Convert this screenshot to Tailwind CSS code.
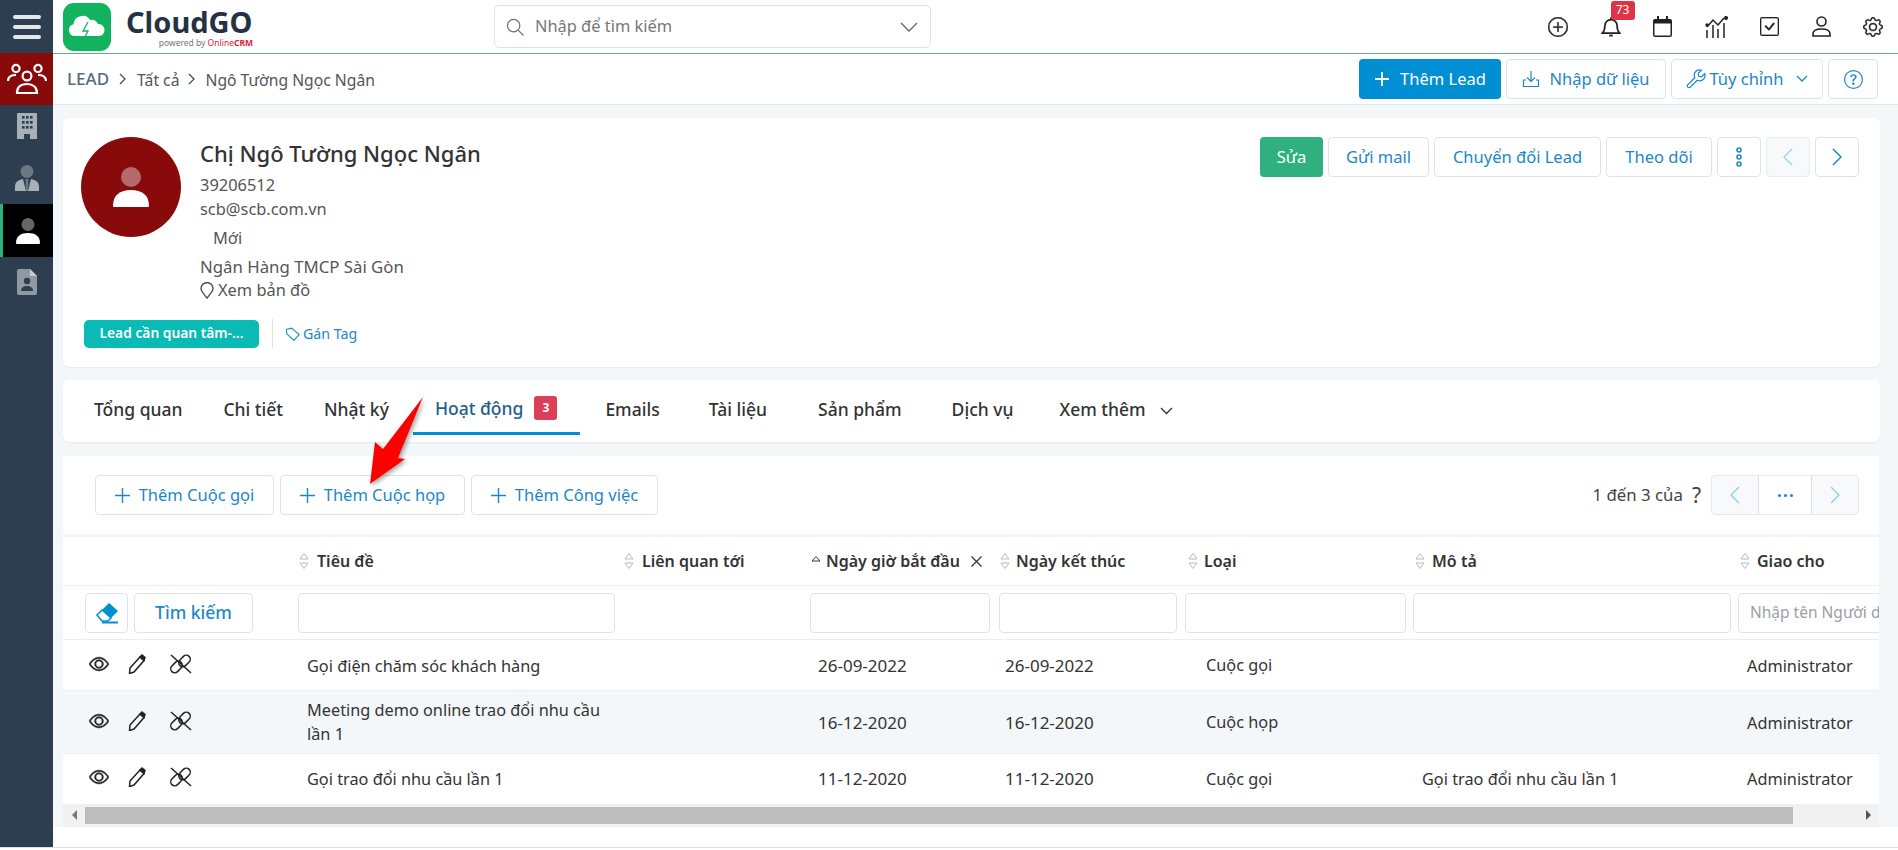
<!DOCTYPE html>
<html lang="vi">
<head>
<meta charset="UTF-8">
<title>CloudGO - Lead</title>
<script src="https://cdn.jsdelivr.net/npm/@tailwindcss/browser@4"></script>
</head>
<body class="bg-white font-['Noto_Sans',sans-serif] text-[14px] text-[#333]">
<div class="relative h-[850px] w-[1898px] overflow-hidden">
  <div class="flex h-[848px] w-full border-b border-[#dfe1e3]">
    <!-- Sidebar -->
    <aside class="flex w-[53px] shrink-0 flex-col bg-[#2c3e50]">
      <div class="flex h-[53px] items-center justify-center">
        <div class="flex w-[28px] flex-col gap-[6px]">
          <span class="h-[4px] rounded bg-[#e5e7eb]"></span><span class="h-[4px] rounded bg-[#e5e7eb]"></span><span class="h-[4px] rounded bg-[#e5e7eb]"></span>
        </div>
      </div>
      <div class="flex h-[52px] items-center justify-center bg-[#880a0a]">
        <svg width="40" height="32" viewBox="0 0 40 32" fill="none" stroke="white" stroke-width="2.2"><circle cx="9" cy="5.5" r="3.6"/><circle cx="31" cy="5.5" r="3.6"/><circle cx="20" cy="13" r="4.4"/><path d="M1 18c0-4 3-6 8-6"/><path d="M39 18c0-4-3-6-8-6"/><path d="M10 30c0-6 4-9 10-9s10 3 10 9z"/></svg>
      </div>
      <div class="flex h-[42px] items-center justify-center">
        <svg width="20" height="26" viewBox="0 0 20 26"><path fill="#a7b0b8" d="M1 0h18a1 1 0 0 1 1 1v25h-7v-5H7v5H0V1a1 1 0 0 1 1-1z"/><g fill="#2c3e50"><rect x="5" y="3" width="2.6" height="2.6"/><rect x="9" y="3" width="2.6" height="2.6"/><rect x="13" y="3" width="2.6" height="2.6"/><rect x="5" y="8" width="2.6" height="2.6"/><rect x="9" y="8" width="2.6" height="2.6"/><rect x="13" y="8" width="2.6" height="2.6"/><rect x="5" y="13" width="2.6" height="2.6"/><rect x="9" y="13" width="2.6" height="2.6"/><rect x="13" y="13" width="2.6" height="2.6"/></g></svg>
      </div>
      <div class="flex h-[57px] items-center justify-center pt-[5px]">
        <svg width="24" height="26" viewBox="0 0 24 26"><circle cx="12" cy="6.5" r="6.5" fill="#6b7884"/><path fill="#a7b0b8" d="M0 26v-4c0-5 3-7 8-8l3 12zM24 26v-4c0-5-3-7-8-8l-3 12z"/><path fill="#6b7884" d="M10.500 14h3L13 26h-2z"/></svg>
      </div>
      <div class="flex h-[53px] items-center justify-center border-l-[3px] border-[#2db27d] bg-black">
        <svg width="24" height="26" viewBox="0 0 24 26"><circle cx="12" cy="6.500" r="6.500" fill="#666"/><path fill="#fff" d="M1 26c-1 0-1-1-1-1 0-7 5-10 12-10s12 3 12 10c0 0 0 1-1 1z"/></svg>
      </div>
      <div class="flex h-[50px] items-center justify-center">
        <svg width="20" height="26" viewBox="0 0 20 26"><path fill="#8e99a3" d="M2 0h11l7 7v17a2 2 0 0 1-2 2H2a2 2 0 0 1-2-2V2a2 2 0 0 1 2-2z"/><path fill="#c5cbd0" d="M13 0l7 7h-7z"/><circle cx="10" cy="12" r="3.200" fill="#2c3e50"/><path fill="#2c3e50" d="M4 22c0-3.500 2.500-5 6-5s6 1.500 6 5z"/></svg>
      </div>
    </aside>

    <div class="flex min-w-0 flex-1 flex-col bg-[#f4f7fa]">
      <!-- Top header -->
      <header class="flex h-[54px] shrink-0 items-center border-b border-[#5fb38b] bg-white pl-[10px]">
        <div class="flex h-[48px] w-[48px] items-center justify-center rounded-[11px] bg-[#12b35f]">
          <svg width="38" height="26" viewBox="0 0 38 26"><path fill="#fff" d="M7 22a6 6 0 0 1-1.500-11.800A9 9 0 0 1 22 6a6.500 6.500 0 0 1 8 4 6 6 0 0 1 1 12z"/><path fill="none" stroke="#12b35f" stroke-width="1.300" d="M20 8l-5 9h5l-4 8"/></svg>
        </div>
        <div class="ml-[15px] flex w-[127px] flex-col items-end">
          <span class="h-[33px] w-full text-[29px] leading-[33px] font-bold text-[#253243]">CloudGO</span>
          <span class="text-[8.500px] leading-[10px] text-[#777]">powered by <span class="text-[#d9263a]">Online<b class="font-bold">CRM</b></span></span>
        </div>
        <div class="ml-[241px] flex h-[43px] w-[437px] items-center rounded-[5px] border border-[#dfe3e7] pr-[12px] pl-[11px]">
          <svg width="18" height="18" viewBox="0 0 16 16" fill="none" stroke="#6b7280" stroke-width="1.100"><circle cx="6.800" cy="6.800" r="5.500"/><path d="M11 11l4.500 4.500"/></svg>
          <span class="ml-[11px] flex-1 text-[16.400px] text-[#777]">Nhập để tìm kiếm</span>
          <svg width="18" height="10" viewBox="0 0 18 10" fill="none" stroke="#666" stroke-width="1.300"><path d="M1 1l8 8 8-8"/></svg>
        </div>
        <!-- Top icons -->
        <div class="ml-[617px] flex items-center gap-[32.500px] text-[#222]">
          <svg width="20" height="20" viewBox="0 0 16 16" fill="currentColor" stroke="currentColor" stroke-width=".3"><path d="M8 15A7 7 0 1 1 8 1a7 7 0 0 1 0 14zm0 1A8 8 0 1 0 8 0a8 8 0 0 0 0 16z"/><path d="M8 4a.500.500 0 0 1 .500.500v3h3a.500.500 0 0 1 0 1h-3v3a.500.500 0 0 1-1 0v-3h-3a.500.500 0 0 1 0-1h3v-3A.500.500 0 0 1 8 4z"/></svg>
          <div class="relative h-[22px] w-[20px]">
            <svg width="20" height="22" viewBox="0 0 16 18" fill="none" stroke="currentColor" stroke-width="1.400"><path d="M1 14h14c-1.500-1.500-2-3-2-6a5 5 0 0 0-10 0c0 3-.500 4.500-2 6z"/><path d="M8 3V1"/><path d="M6.500 16h3" stroke-width="1.500"/></svg>
            <span class="absolute top-[-15px] left-[10px] flex h-[19px] w-[24px] items-center justify-center rounded-[3px] bg-[#dc3545] text-[12px] leading-none text-white">73</span>
          </div>
          <svg width="19" height="21" viewBox="0 0 19 21"><path fill="#222" d="M2 3h2V0h2v3h7V0h2v3h2a2 2 0 0 1 2 2v14a2 2 0 0 1-2 2H2a2 2 0 0 1-2-2V5a2 2 0 0 1 2-2z"/><rect x="1.500" y="7.500" width="16" height="12" fill="#fff"/></svg>
          <svg width="23" height="22" viewBox="0 0 23 22" fill="none" stroke="#222" stroke-width="1.500"><path d="M2 11l6-7 5 5 6-7"/><path d="M2 14v8M8 9v13M13 13v9M19 7v15"/><circle cx="2" cy="9" r="1" fill="#222"/><circle cx="21" cy="2" r="1.300" fill="#222"/></svg>
          <svg width="19" height="19" viewBox="0 0 16 16" fill="currentColor" stroke="currentColor" stroke-width=".2"><path d="M14 1a1 1 0 0 1 1 1v12a1 1 0 0 1-1 1H2a1 1 0 0 1-1-1V2a1 1 0 0 1 1-1h12zM2 0a2 2 0 0 0-2 2v12a2 2 0 0 0 2 2h12a2 2 0 0 0 2-2V2a2 2 0 0 0-2-2H2z"/><path d="M10.970 4.970a.75.75 0 0 1 1.070 1.050l-3.990 4.990a.75.75 0 0 1-1.080.020L4.320 8.384a.75.75 0 1 1 1.060-1.060l2.094 2.093 3.473-4.425z"/></svg>
          <svg width="19" height="21" viewBox="0 0 19 21" fill="none" stroke="#222" stroke-width="1.600"><circle cx="9.500" cy="5.500" r="4.500"/><path d="M1 20v-2c0-3 3-5 8.500-5s8.500 2 8.500 5v2z"/></svg>
          <svg width="20" height="20" viewBox="0 0 16 16" fill="currentColor" stroke="currentColor" stroke-width=".25"><path d="M8 4.754a3.246 3.246 0 1 0 0 6.492 3.246 3.246 0 0 0 0-6.492zM5.754 8a2.246 2.246 0 1 1 4.492 0 2.246 2.246 0 0 1-4.492 0z"/><path d="M9.796 1.343c-.527-1.790-3.065-1.790-3.592 0l-.094.319a.873.873 0 0 1-1.255.520l-.292-.160c-1.640-.892-3.433.902-2.540 2.541l.159.292a.873.873 0 0 1-.520 1.255l-.319.094c-1.790.527-1.790 3.065 0 3.592l.319.094a.873.873 0 0 1 .520 1.255l-.160.292c-.892 1.640.901 3.434 2.541 2.540l.292-.159a.873.873 0 0 1 1.255.520l.094.319c.527 1.790 3.065 1.790 3.592 0l.094-.319a.873.873 0 0 1 1.255-.520l.292.160c1.640.893 3.434-.902 2.540-2.541l-.159-.292a.873.873 0 0 1 .520-1.255l.319-.094c1.790-.527 1.790-3.065 0-3.592l-.319-.094a.873.873 0 0 1-.520-1.255l.160-.292c.893-1.640-.902-3.433-2.541-2.540l-.292.159a.873.873 0 0 1-1.255-.520l-.094-.319zm-2.633.283c.246-.835 1.428-.835 1.674 0l.094.319a1.873 1.873 0 0 0 2.693 1.115l.291-.160c.764-.415 1.600.420 1.184 1.185l-.159.292a1.873 1.873 0 0 0 1.116 2.692l.318.094c.835.246.835 1.428 0 1.674l-.319.094a1.873 1.873 0 0 0-1.115 2.693l.160.291c.415.764-.420 1.600-1.185 1.184l-.291-.159a1.873 1.873 0 0 0-2.693 1.116l-.094.318c-.246.835-1.428.835-1.674 0l-.094-.319a1.873 1.873 0 0 0-2.692-1.115l-.292.160c-.764.415-1.600-.420-1.184-1.185l.159-.291A1.873 1.873 0 0 0 1.945 8.930l-.319-.094c-.835-.246-.835-1.428 0-1.674l.319-.094A1.873 1.873 0 0 0 3.060 4.377l-.160-.292c-.415-.764.420-1.600 1.185-1.184l.292.159a1.873 1.873 0 0 0 2.692-1.115l.094-.319z"/></svg>
        </div>
      </header>

      <!-- Breadcrumb bar -->
      <div class="flex h-[51px] shrink-0 items-center border-b border-[#e2e5e8] bg-white pr-[20px] pl-[14px]">
        <span class="text-[17px] font-medium text-[#5a6a7e]">LEAD</span>
        <svg class="mx-[10px]" width="8" height="12" viewBox="0 0 8 12" fill="none" stroke="#444" stroke-width="1.200"><path d="M1 1l5 5-5 5"/></svg>
        <span class="pt-[3px] text-[15.700px] text-[#555]">Tất cả</span>
        <svg class="mx-[9px]" width="8" height="12" viewBox="0 0 8 12" fill="none" stroke="#444" stroke-width="1.200"><path d="M1 1l5 5-5 5"/></svg>
        <span class="pt-[3px] text-[15.700px] text-[#555]">Ngô Tường Ngọc Ngân</span>
        <div class="ml-auto flex gap-[5px] text-[16.500px] text-[#1b87c9]">
          <button class="flex h-[40px] w-[142px] items-center justify-center gap-[10px] rounded-[4px] bg-[#008fd3] text-white">
            <svg width="16" height="16" viewBox="0 0 16 16" stroke="white" stroke-width="1.800"><path d="M8 1v14M1 8h14"/></svg>Thêm Lead
          </button>
          <button class="flex h-[40px] w-[160px] items-center justify-center gap-[9px] rounded-[4px] border border-[#dfe3e7] bg-white">
            <svg width="18" height="18" viewBox="0 0 18 18" fill="none" stroke="#1b87c9" stroke-width="1.200"><path d="M9 1v10M5 7.500l4 4 4-4"/><path d="M4 10H1.500v6.500h15V10H14"/></svg>Nhập dữ liệu
          </button>
          <button class="flex h-[40px] w-[152px] items-center justify-center gap-[3px] rounded-[4px] border border-[#dfe3e7] bg-white">
            <svg width="20" height="20" viewBox="0 0 16 16" fill="none" stroke="#1b87c9" stroke-width="1"><path d="M1.500 14.500a1.400 1.400 0 0 0 2 0L9 9c2 .8 4 .3 5.200-1 1-1.200 1.300-2.800.8-4.300L12.500 6.200 10.200 5.800 9.800 3.500 12.300 1c-1.500-.500-3.100-.200-4.300.800-1.300 1.200-1.800 3.200-1 5.200L1.500 12.500a1.400 1.400 0 0 0 0 2z"/></svg>Tùy chỉnh
            <svg class="ml-[9px]" width="12" height="8" viewBox="0 0 12 8" fill="none" stroke="#1b87c9" stroke-width="1.300"><path d="M1 1l5 5 5-5"/></svg>
          </button>
          <button class="flex h-[40px] w-[50px] items-center justify-center rounded-[4px] border border-[#dfe3e7] bg-white">
            <svg width="19" height="19" viewBox="0 0 16 16" fill="#1b87c9"><path d="M8 15A7 7 0 1 1 8 1a7 7 0 0 1 0 14zm0 1A8 8 0 1 0 8 0a8 8 0 0 0 0 16z"/><path d="M5.255 5.786a.237.237 0 0 0 .241.247h.825c.138 0 .248-.113.266-.250.090-.656.540-1.134 1.342-1.134.686 0 1.314.343 1.314 1.168 0 .635-.374.927-.965 1.371-.673.489-1.206 1.060-1.168 1.987l.003.217a.250.250 0 0 0 .250.246h.811a.250.250 0 0 0 .250-.250v-.105c0-.718.273-.927 1.010-1.486.609-.463 1.244-.977 1.244-2.056 0-1.511-1.276-2.241-2.673-2.241-1.267 0-2.655.590-2.750 2.286zm1.557 5.763c0 .533.425.927 1.010.927.609 0 1.028-.394 1.028-.927 0-.552-.420-.940-1.029-.940-.584 0-1.009.388-1.009.940z"/></svg>
          </button>
        </div>
      </div>

      <!-- Content -->
      <main class="flex flex-1 flex-col pt-[13px] pr-[18px] pl-[10px]">
        <!-- Profile card -->
        <section class="h-[249px] shrink-0 rounded-[6px] bg-white pt-[19px] pl-[18px] shadow-[0_1px_2px_rgba(0,0,0,0.06)]">
          <div class="flex">
            <div class="flex h-[100px] w-[100px] shrink-0 items-center justify-center rounded-full bg-[#880a0a]">
              <svg width="36" height="40" viewBox="0 0 36 40"><circle cx="18" cy="10" r="10" fill="#b46a6a"/><path fill="#fff" d="M1 40c-1 0-1-1-1-1 0-11 7-16 18-16s18 5 18 16c0 0 0 1-1 1z"/></svg>
            </div>
            <div class="ml-[19px] w-[400px] text-[16.400px] text-[#555]">
              <div class="h-[36px] text-[22px] leading-[33px] font-medium text-[#333]">Chị Ngô Tường Ngọc Ngân</div>
              <div class="h-[24px] leading-[24px]">39206512</div>
              <div class="h-[24px] leading-[24px]">scb@scb.com.vn</div>
              <div class="h-[33px] pl-[13px] leading-[33px]">Mới</div>
              <div class="h-[25px] text-[16.800px] leading-[25px]">Ngân Hàng TMCP Sài Gòn</div>
              <div class="flex h-[23px] items-center gap-[4px]">
                <svg width="14" height="17" viewBox="0 0 14 17" fill="none" stroke="#444" stroke-width="1.300"><path d="M7 16C4 12 1 9.500 1 6.500a6 6 0 0 1 12 0C13 9.500 10 12 7 16z"/></svg>Xem bản đồ
              </div>
            </div>
            <div class="ml-auto flex gap-[5px] pr-[21px] text-[16.500px] text-[#1b87c9]">
              <button class="h-[40px] w-[63px] rounded-[4px] bg-[#30b07f] text-white">Sửa</button>
              <button class="h-[40px] w-[101px] rounded-[4px] border border-[#dfe3e7]">Gửi mail</button>
              <button class="h-[40px] w-[167px] rounded-[4px] border border-[#dfe3e7]">Chuyển đổi Lead</button>
              <button class="h-[40px] w-[106px] rounded-[4px] border border-[#dfe3e7]">Theo dõi</button>
              <button class="flex h-[40px] w-[44px] items-center justify-center rounded-[4px] border border-[#dfe3e7]">
                <svg width="6" height="20" viewBox="0 0 6 20" fill="none" stroke="#1b87c9" stroke-width="1.600"><circle cx="3" cy="3" r="2"/><circle cx="3" cy="10" r="2"/><circle cx="3" cy="17" r="2"/></svg>
              </button>
              <button class="flex h-[40px] w-[44px] items-center justify-center rounded-[4px] border border-[#e9ecef] bg-[#f8f9fa]">
                <svg width="10" height="18" viewBox="0 0 10 18" fill="none" stroke="#a6d5f0" stroke-width="1.500"><path d="M9 1L1 9l8 8"/></svg>
              </button>
              <button class="flex h-[40px] w-[44px] items-center justify-center rounded-[4px] border border-[#dfe3e7]">
                <svg width="10" height="18" viewBox="0 0 10 18" fill="none" stroke="#1b87c9" stroke-width="1.500"><path d="M1 1l8 8-8 8"/></svg>
              </button>
            </div>
          </div>
          <div class="mt-[17px] flex items-center pl-[3px]">
            <span class="flex h-[28px] w-[175px] items-center justify-center rounded-[5px] bg-[#0abab5] text-[13.800px] font-semibold text-white">Lead cần quan tâm-...</span>
            <span class="mx-[13px] h-[29px] w-px bg-[#dde1e5]"></span>
            <svg width="14" height="16" viewBox="0 0 14 16" fill="none" stroke="#1b87c9" stroke-width="1.100"><path d="M1 2.500V7l6 7.500 6-5L6.500 2z" transform="rotate(-8 7 8)"/></svg>
            <span class="ml-[3px] text-[14.200px] text-[#1b87c9]">Gán Tag</span>
          </div>
        </section>

        <!-- Tabs -->
        <nav class="mt-[13px] flex h-[62px] shrink-0 items-start rounded-[6px] bg-white pl-[31px] text-[17.500px] font-medium text-[#333] shadow-[0_1px_2px_rgba(0,0,0,0.06)]">
          <span class="mt-[16px]">Tổng quan</span>
          <span class="mt-[16px] ml-[41px]">Chi tiết</span>
          <span class="mt-[16px] ml-[41px]">Nhật ký</span>
          <span class="ml-[24px] flex h-[55px] items-center gap-[11px] border-b-[3px] border-[#008fd3] pt-[4px] pr-[23px] pl-[22px] text-[#1f5f8b]">Hoạt động <b class="flex h-[24px] w-[23px] items-center justify-center rounded-[3px] bg-[#dc3f5a] text-[12px] font-bold text-white">3</b></span>
          <span class="mt-[16px] ml-[25px]">Emails</span>
          <span class="mt-[16px] ml-[49px]">Tài liệu</span>
          <span class="mt-[16px] ml-[51px]">Sản phẩm</span>
          <span class="mt-[16px] ml-[50px]">Dịch vụ</span>
          <span class="mt-[16px] ml-[46px]">Xem thêm</span>
          <svg class="mt-[27px] ml-[14px]" width="13" height="8" viewBox="0 0 13 8" fill="none" stroke="#333" stroke-width="1.300"><path d="M1 1l5.500 5.500L12 1"/></svg>
        </nav>

        <!-- Activity list -->
        <section class="mt-[14px] flex w-[1816px] shrink-0 flex-col bg-white">
          <div class="flex h-[78px] shrink-0 items-center pr-[20px] pl-[32px] text-[16.500px] text-[#1b87c9]">
            <button class="flex h-[40px] w-[179px] items-center justify-center gap-[9px] rounded-[4px] border border-[#dfe3e7]">
              <svg width="15" height="15" viewBox="0 0 15 15" stroke="#1b87c9" stroke-width="1.400"><path d="M7.500 0v15M0 7.500h15"/></svg>Thêm Cuộc gọi
            </button>
            <button class="ml-[6px] flex h-[40px] w-[185px] items-center justify-center gap-[9px] rounded-[4px] border border-[#dfe3e7]">
              <svg width="15" height="15" viewBox="0 0 15 15" stroke="#1b87c9" stroke-width="1.400"><path d="M7.500 0v15M0 7.500h15"/></svg>Thêm Cuộc họp
            </button>
            <button class="ml-[6px] flex h-[40px] w-[187px] items-center justify-center gap-[9px] rounded-[4px] border border-[#dfe3e7]">
              <svg width="15" height="15" viewBox="0 0 15 15" stroke="#1b87c9" stroke-width="1.400"><path d="M7.500 0v15M0 7.500h15"/></svg>Thêm Công việc
            </button>
            <span class="ml-auto text-[16.800px] text-[#444]">1 đến 3 của</span>
            <span class="mr-[10px] ml-[9px] text-[21px] leading-none text-[#444]">?</span>
            <div class="flex h-[40px] w-[148px] overflow-hidden rounded-[4px] border border-[#e5e8eb] bg-[#f8f9fa]">
              <span class="flex w-[46px] items-center justify-center"><svg width="10" height="18" viewBox="0 0 10 18" fill="none" stroke="#8ecdf0" stroke-width="1.400"><path d="M9 1L1 9l8 8"/></svg></span>
              <span class="flex w-[55px] items-center justify-center gap-[3px] border-x border-[#d9dde1] bg-white">
                <i class="h-[3px] w-[3px] rounded-full bg-[#1b87c9]"></i><i class="h-[3px] w-[3px] rounded-full bg-[#1b87c9]"></i><i class="h-[3px] w-[3px] rounded-full bg-[#1b87c9]"></i>
              </span>
              <span class="flex w-[46px] items-center justify-center"><svg width="10" height="18" viewBox="0 0 10 18" fill="none" stroke="#8ecdf0" stroke-width="1.400"><path d="M1 1l8 8-8 8"/></svg></span>
            </div>
          </div>

          <div class="overflow-hidden">
            <table class="w-[1960px] table-fixed border-collapse text-[16.300px] text-[#333]">
              <colgroup>
                <col class="w-[231px]"><col class="w-[325px]"><col class="w-[187px]"><col class="w-[189px]"><col class="w-[186px]"><col class="w-[228px]"><col class="w-[325px]"><col class="w-[289px]">
              </colgroup>
              <thead>
                <tr class="h-[50px] border-t-[3px] border-b border-t-[#f2f4f6] border-b-[#eceef0] text-[16px]">
                  <th></th>
                  <th class="pl-[5px] text-left font-semibold"><span class="flex items-center gap-[8px]"><svg width="10" height="18" viewBox="0 0 10 18" fill="none" stroke="#b5bbc1"><path d="M5 1.500L9 7H1zM5 16.500L9 11H1z"/></svg>Tiêu đề</span></th>
                  <th class="pl-[5px] text-left font-semibold"><span class="flex items-center gap-[8px]"><svg width="10" height="18" viewBox="0 0 10 18" fill="none" stroke="#b5bbc1"><path d="M5 1.500L9 7H1zM5 16.500L9 11H1z"/></svg>Liên quan tới</span></th>
                  <th class="pl-[5px] text-left font-semibold"><span class="flex items-center gap-[5px] whitespace-nowrap"><svg class="shrink-0" width="10" height="18" viewBox="0 0 10 18" fill="none" stroke="#333"><path d="M5 4.500L9 9H1z"/></svg>Ngày giờ bắt đầu<svg class="ml-[6px] shrink-0" width="11" height="11" viewBox="0 0 11 11" stroke="#333" stroke-width="1.200"><path d="M.500.500l10 10M10.500.500l-10 10"/></svg></span></th>
                  <th class="pl-[5px] text-left font-semibold"><span class="flex items-center gap-[6px]"><svg width="10" height="18" viewBox="0 0 10 18" fill="none" stroke="#b5bbc1"><path d="M5 1.500L9 7H1zM5 16.500L9 11H1z"/></svg>Ngày kết thúc</span></th>
                  <th class="pl-[7px] text-left font-semibold"><span class="flex items-center gap-[6px]"><svg width="10" height="18" viewBox="0 0 10 18" fill="none" stroke="#b5bbc1"><path d="M5 1.500L9 7H1zM5 16.500L9 11H1z"/></svg>Loại</span></th>
                  <th class="pl-[6px] text-left font-semibold"><span class="flex items-center gap-[7px]"><svg width="10" height="18" viewBox="0 0 10 18" fill="none" stroke="#b5bbc1"><path d="M5 1.500L9 7H1zM5 16.500L9 11H1z"/></svg>Mô tả</span></th>
                  <th class="pl-[6px] text-left font-semibold"><span class="flex items-center gap-[7px]"><svg width="10" height="18" viewBox="0 0 10 18" fill="none" stroke="#b5bbc1"><path d="M5 1.500L9 7H1zM5 16.500L9 11H1z"/></svg>Giao cho</span></th>
                </tr>
                <tr class="h-[54px] border-b border-[#eceef0]">
                  <td class="pl-[22px]">
                    <div class="flex gap-[6px]">
                      <button class="flex h-[40px] w-[43px] items-center justify-center rounded-[4px] border border-[#dfe3e7]">
                        <svg width="24" height="22" viewBox="0 0 24 22"><path fill="#008fd3" d="M14 1l9 8-7 7-9-8z"/><path fill="#fff" stroke="#008fd3" stroke-width="1.500" d="M7 8l9 8-3 3H7l-5-6z"/><path stroke="#008fd3" stroke-width="2" d="M7 20.500h16"/></svg>
                      </button>
                      <button class="h-[40px] w-[119px] rounded-[4px] border border-[#dfe3e7] text-[17.500px] font-medium text-[#1b87c9]">Tìm kiếm</button>
                    </div>
                  </td>
                  <td class="px-[4px]"><div class="h-[40px] rounded-[4px] border border-[#dfe3e7]"></div></td>
                  <td></td>
                  <td class="pr-[5px] pl-[4px]"><div class="h-[40px] rounded-[4px] border border-[#dfe3e7]"></div></td>
                  <td class="pr-[4px] pl-[4px]"><div class="h-[40px] rounded-[4px] border border-[#dfe3e7]"></div></td>
                  <td class="pr-[3px] pl-[4px]"><div class="h-[40px] rounded-[4px] border border-[#dfe3e7]"></div></td>
                  <td class="pr-[3px] pl-[4px]"><div class="h-[40px] rounded-[4px] border border-[#dfe3e7]"></div></td>
                  <td class="pl-[4px]"><div class="flex h-[40px] w-[200px] items-center rounded-[4px] border border-[#dfe3e7] pl-[11px] text-[15.500px] whitespace-nowrap text-[#9aa0a6]">Nhập tên Người dùng</div></td>
                </tr>
              </thead>
              <tbody>
                <tr class="h-[51px] border-b border-[#eceef0]">
                  <td class="pb-[3px] pl-[26px]">
                    <div class="flex items-center">
                      <svg width="20" height="20" viewBox="0 0 16 16" fill="#222" stroke="#222" stroke-width=".45"><path d="M16 8s-3-5.500-8-5.500S0 8 0 8s3 5.500 8 5.500S16 8 16 8zM1.173 8a13.133 13.133 0 0 1 1.660-2.043C4.120 4.668 5.880 3.500 8 3.500c2.120 0 3.879 1.168 5.168 2.457A13.133 13.133 0 0 1 14.828 8c-.058.087-.122.183-.195.288-.335.480-.830 1.120-1.465 1.755C11.879 11.332 10.119 12.500 8 12.500c-2.120 0-3.879-1.168-5.168-2.457A13.134 13.134 0 0 1 1.172 8z"/><path d="M8 5.500a2.500 2.500 0 1 0 0 5 2.500 2.500 0 0 0 0-5zM4.500 8a3.500 3.500 0 1 1 7 0 3.500 3.500 0 0 1-7 0z"/></svg>
                      <svg class="ml-[19px]" width="18" height="20" viewBox="0 0 18 20" fill="none" stroke="#222" stroke-width="1.500"><path d="M2 14L12 3l4 3.500L6 18l-4.500 1.500z"/><path fill="#222" d="M12 3l2-2 3 2.500-1 3z"/></svg>
                      <svg class="ml-[23px]" width="23" height="20" viewBox="0 0 23 20" fill="none" stroke="#222" stroke-width="1.500"><rect x="1" y="9" width="13" height="8" rx="4" transform="rotate(-45 7.500 13)"/><rect x="9" y="3" width="13" height="8" rx="4" transform="rotate(-45 15.500 7)"/><path d="M2 1l20 18"/></svg>
                    </div>
                  </td>
                  <td class="pt-[2px] pl-[13px]">Gọi điện chăm sóc khách hàng</td>
                  <td></td>
                  <td class="pt-[2px] pl-[12px] text-[17px]">26-09-2022</td>
                  <td class="pt-[2px] pl-[10px] text-[17px]">26-09-2022</td>
                  <td class="pl-[25px]">Cuộc gọi</td>
                  <td class="pl-[13px]"></td>
                  <td class="pt-[2px] pl-[13px]">Administrator</td>
                </tr>
                <tr class="h-[63px] border-b border-[#eceef0] bg-[#f4f7fa]">
                  <td class="pb-[3px] pl-[26px]">
                    <div class="flex items-center">
                      <svg width="20" height="20" viewBox="0 0 16 16" fill="#222" stroke="#222" stroke-width=".45"><path d="M16 8s-3-5.500-8-5.500S0 8 0 8s3 5.500 8 5.500S16 8 16 8zM1.173 8a13.133 13.133 0 0 1 1.660-2.043C4.120 4.668 5.880 3.500 8 3.500c2.120 0 3.879 1.168 5.168 2.457A13.133 13.133 0 0 1 14.828 8c-.058.087-.122.183-.195.288-.335.480-.830 1.120-1.465 1.755C11.879 11.332 10.119 12.500 8 12.500c-2.120 0-3.879-1.168-5.168-2.457A13.134 13.134 0 0 1 1.172 8z"/><path d="M8 5.500a2.500 2.500 0 1 0 0 5 2.500 2.500 0 0 0 0-5zM4.500 8a3.500 3.500 0 1 1 7 0 3.500 3.500 0 0 1-7 0z"/></svg>
                      <svg class="ml-[19px]" width="18" height="20" viewBox="0 0 18 20" fill="none" stroke="#222" stroke-width="1.500"><path d="M2 14L12 3l4 3.500L6 18l-4.500 1.500z"/><path fill="#222" d="M12 3l2-2 3 2.500-1 3z"/></svg>
                      <svg class="ml-[23px]" width="23" height="20" viewBox="0 0 23 20" fill="none" stroke="#222" stroke-width="1.500"><rect x="1" y="9" width="13" height="8" rx="4" transform="rotate(-45 7.500 13)"/><rect x="9" y="3" width="13" height="8" rx="4" transform="rotate(-45 15.500 7)"/><path d="M2 1l20 18"/></svg>
                    </div>
                  </td>
                  <td class="pr-[13px] pl-[13px] leading-[24px]">Meeting demo online trao đổi nhu cầu lần 1</td>
                  <td></td>
                  <td class="pt-[2px] pl-[12px] text-[17px]">16-12-2020</td>
                  <td class="pt-[2px] pl-[10px] text-[17px]">16-12-2020</td>
                  <td class="pl-[25px]">Cuộc họp</td>
                  <td class="pl-[13px]"></td>
                  <td class="pt-[2px] pl-[13px]">Administrator</td>
                </tr>
                <tr class="h-[50px]">
                  <td class="pb-[3px] pl-[26px]">
                    <div class="flex items-center">
                      <svg width="20" height="20" viewBox="0 0 16 16" fill="#222" stroke="#222" stroke-width=".45"><path d="M16 8s-3-5.500-8-5.500S0 8 0 8s3 5.500 8 5.500S16 8 16 8zM1.173 8a13.133 13.133 0 0 1 1.660-2.043C4.120 4.668 5.880 3.500 8 3.500c2.120 0 3.879 1.168 5.168 2.457A13.133 13.133 0 0 1 14.828 8c-.058.087-.122.183-.195.288-.335.480-.830 1.120-1.465 1.755C11.879 11.332 10.119 12.500 8 12.500c-2.120 0-3.879-1.168-5.168-2.457A13.134 13.134 0 0 1 1.172 8z"/><path d="M8 5.500a2.500 2.500 0 1 0 0 5 2.500 2.500 0 0 0 0-5zM4.500 8a3.500 3.500 0 1 1 7 0 3.500 3.500 0 0 1-7 0z"/></svg>
                      <svg class="ml-[19px]" width="18" height="20" viewBox="0 0 18 20" fill="none" stroke="#222" stroke-width="1.500"><path d="M2 14L12 3l4 3.500L6 18l-4.500 1.500z"/><path fill="#222" d="M12 3l2-2 3 2.500-1 3z"/></svg>
                      <svg class="ml-[23px]" width="23" height="20" viewBox="0 0 23 20" fill="none" stroke="#222" stroke-width="1.500"><rect x="1" y="9" width="13" height="8" rx="4" transform="rotate(-45 7.500 13)"/><rect x="9" y="3" width="13" height="8" rx="4" transform="rotate(-45 15.500 7)"/><path d="M2 1l20 18"/></svg>
                    </div>
                  </td>
                  <td class="pl-[13px]">Gọi trao đổi nhu cầu lần 1</td>
                  <td></td>
                  <td class="pl-[12px] text-[17px]">11-12-2020</td>
                  <td class="pl-[10px] text-[17px]">11-12-2020</td>
                  <td class="pl-[25px]">Cuộc gọi</td>
                  <td class="pl-[13px]">Gọi trao đổi nhu cầu lần 1</td>
                  <td class="pl-[13px]">Administrator</td>
                </tr>
              </tbody>
            </table>
          </div>

          <!-- Horizontal scrollbar -->
          <div class="flex h-[23px] shrink-0 items-center bg-[#f1f1f1]">
            <span class="flex w-[22px] items-center justify-center"><i class="h-0 w-0 border-y-[5px] border-r-[5px] border-y-transparent border-r-[#777]"></i></span>
            <span class="h-[17px] w-[1708px] bg-[#bdbdbd]"></span>
            <span class="ml-auto flex w-[22px] items-center justify-center"><i class="h-0 w-0 border-y-[5px] border-l-[5px] border-y-transparent border-l-[#555]"></i></span>
          </div>
        </section>
        <div class="-mr-[18px] -ml-[10px] flex-1 bg-white"></div>
      </main>
    </div>
  </div>

  <!-- Red annotation arrow -->
  <svg class="absolute top-[390px] left-[360px] drop-shadow-[2px_2px_2px_rgba(0,0,0,0.35)]" width="70" height="100" viewBox="360 390 70 100"><path fill="#f00" d="M423 397L398 458l7 1-35 25 5-42 8 7z"/></svg>
</div>
</body>
</html>
